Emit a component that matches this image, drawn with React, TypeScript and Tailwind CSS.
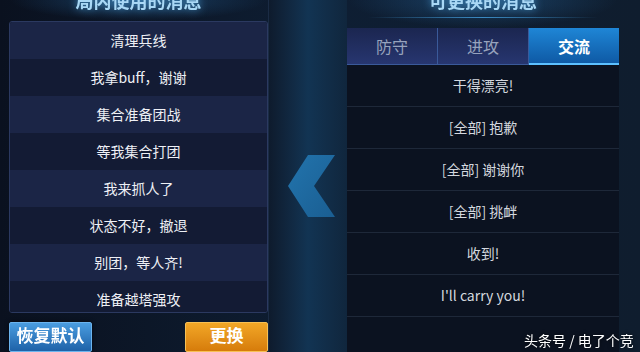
import React from 'react';

const font = { fontFamily: '"Noto Sans CJK SC", "Noto Sans", sans-serif' };

const leftMessages = ['清理兵线', '我拿buff，谢谢', '集合准备团战', '等我集合打团', '我来抓人了', '状态不好，撤退', '别团，等人齐!', '准备越塔强攻'];
const rightMessages = ['干得漂亮!', '[全部] 抱歉', '[全部] 谢谢你', '[全部] 挑衅', '收到!', "I'll carry you!"];
const tabs = ['防守', '进攻', '交流'];

const App: React.FC = () => {
    return (
        <div style={font} className="relative w-[640px] h-[352px] overflow-hidden flex bg-gradient-to-r from-[#0a111f] via-[#0e1e33] to-[#0f1d2e] text-white">
            {/* left column */}
            <div className="ml-[9px] w-[259px] flex flex-col shrink-0">
                <div className="h-[21px] flex justify-center bg-[radial-gradient(ellipse_at_top,rgba(40,110,170,0.45),transparent_70%)]">
                    <span className="mt-[-9px] leading-[18px] text-[18px] font-bold text-[#a9d8f5] drop-shadow-[0_0_4px_rgba(80,170,230,0.8)]">局内使用的消息</span>
                </div>
                <div className="h-[296px] rounded-[3px] border border-[#2b3960] overflow-hidden flex flex-col">
                    {leftMessages.map((m, i) => (
                        <div
                            key={m}
                            className={
                                'h-[37px] shrink-0 flex items-center justify-center text-[14px] text-[#eef0f5] ' +
                                (i % 2 === 0 ? 'bg-[#1b2546]' : 'bg-[#131b34]')
                            }
                        >
                            {m}
                        </div>
                    ))}
                </div>
                <div className="mt-[9px] flex justify-between">
                    <button className="w-[83px] h-[30px] rounded-[2px] border border-[#6cb4ee] bg-gradient-to-b from-[#4a9de0] to-[#1e62a8] text-[17px] font-bold text-white leading-[24px] flex justify-center items-start drop-shadow-[0_0_2px_rgba(0,0,0,0.6)]">
                        恢复默认
                    </button>
                    <button className="w-[83px] h-[30px] rounded-[2px] border border-[#f7c055] bg-gradient-to-b from-[#f2a726] to-[#d67c0a] text-[17px] font-bold text-white leading-[24px] flex justify-center items-start">
                        更换
                    </button>
                </div>
            </div>

            {/* middle strip with arrow */}
            <div className="w-[79px] shrink-0 flex items-center justify-center bg-gradient-to-r from-[#0e1b2d] via-[#123453] to-[#10263d] border-l border-[#1a2b44]">
                <svg width="48" height="63" viewBox="0 0 48 63" className="mt-[20px] ml-[8px]">
                    <defs>
                        <linearGradient id="chev" x1="0" y1="0" x2="1" y2="1">
                            <stop offset="0" stopColor="#2274ad" />
                            <stop offset="1" stopColor="#1a5e92" />
                        </linearGradient>
                    </defs>
                    <polygon points="20,0 47,0 26,31 47,62 20,62 0,31" fill="url(#chev)" />
                </svg>
            </div>

            {/* right column */}
            <div className="w-[272px] shrink-0 flex flex-col">
                <div className="h-[28px] flex flex-col items-center bg-[radial-gradient(ellipse_at_top,rgba(40,110,170,0.45),transparent_70%)]">
                    <span className="mt-[-9px] leading-[18px] text-[18px] font-bold text-[#a9d8f5] drop-shadow-[0_0_4px_rgba(80,170,230,0.8)]">可更换的消息</span>
                    <div className="mt-[8px] w-[230px] h-px bg-gradient-to-r from-transparent via-[#3b8bc4] to-transparent" />
                </div>
                <div className="h-[37px] flex">
                    {tabs.map((t, i) => (
                        <div
                            key={t}
                            className={
                                'flex-1 flex items-center justify-center text-[16px] ' +
                                (i === 2
                                    ? 'bg-gradient-to-b from-[#1f86d6] to-[#0f5aa5] text-white font-bold border-b-2 border-[#5cc0ff]'
                                    : 'bg-gradient-to-b from-[#1b2650] to-[#273670] text-[#97a3bd] border-r border-[#0f1630] border-b border-[#3a5a9a]')
                            }
                        >
                            {t}
                        </div>
                    ))}
                </div>
                <div className="h-[252px] flex flex-col bg-[#0b1220]">
                    {rightMessages.map((m) => (
                        <div key={m} className="h-[42px] shrink-0 flex items-center justify-center text-[14px] text-[#d4d8df] border-b border-[#1e2839]">
                            {m}
                        </div>
                    ))}
                </div>
                <div className="flex-1 bg-[#0b1220]" />
            </div>

            {/* watermark */}
            <div className="absolute left-[524px] top-[330px] text-[14px] leading-[20px] text-white drop-shadow-[0_0_2px_rgba(0,0,0,0.8)] whitespace-nowrap">
                头条号 / 电了个竞
            </div>
        </div>
    );
};

export default App;
